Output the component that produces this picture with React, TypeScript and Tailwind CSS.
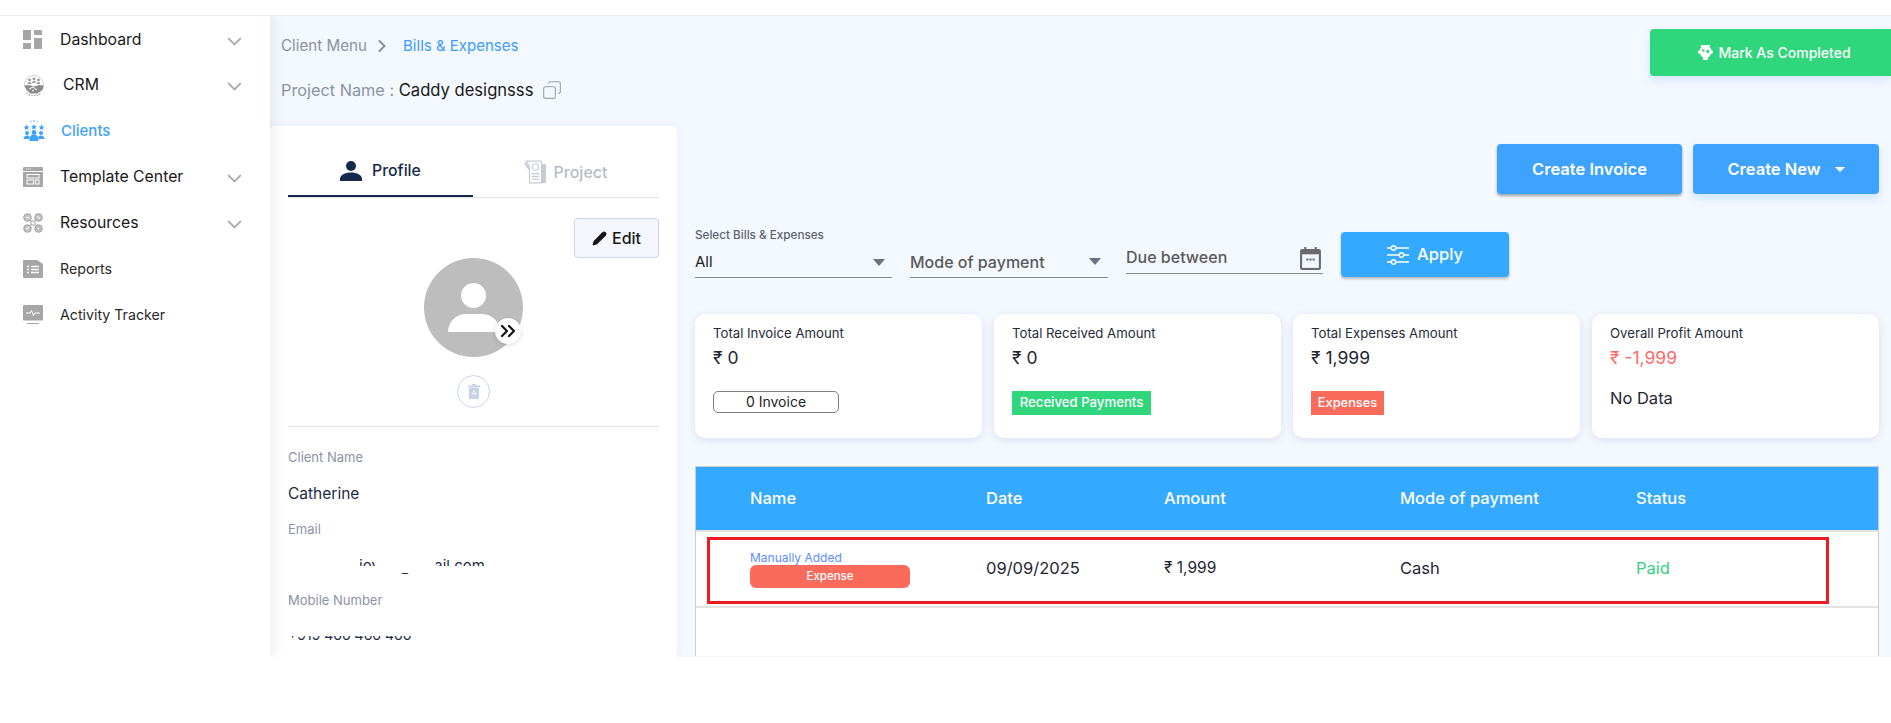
import React from 'react';
import { ChevronDown, ChevronRight, ChevronsRight, Copy, Pencil } from 'lucide-react';

const font = { fontFamily: 'Inter, "Noto Sans", sans-serif' };

const DashboardIcon = () => (
  <svg width="20" height="20" viewBox="0 0 20 20" fill="#a6a6a6">
    <rect x="0" y="0" width="8" height="10" />
    <rect x="11" y="0" width="8" height="5" />
    <rect x="11" y="8" width="8" height="11" />
    <rect x="0" y="13" width="8" height="6" />
  </svg>
);

const CrmIcon = () => (
  <svg width="22" height="22" viewBox="0 0 22 22" fill="#9a9a9a">
    <path d="M1.500 11a9.500 9.500 0 0 1 19 0" fill="none" stroke="#b0b0b0" strokeWidth="1" strokeDasharray="1.500 1" />
    <circle cx="6.500" cy="6" r="1.400" />
    <circle cx="11" cy="5" r="1.400" />
    <circle cx="15.500" cy="6" r="1.400" />
    <path d="M4.500 10a2 2 0 0 1 4 0zM9 9a2 2 0 0 1 4 0zM13.500 10a2 2 0 0 1 4 0z" />
    <path d="M1 11.500l5-.5 5 1.500 5-1.500 5 .5-1.500 4.500-5 3.500h-7l-4-3.500z" fill="#8c8c8c" />
    <path d="M6 15l4-2 4 3M9 17l2-1" fill="none" stroke="#fff" strokeWidth="1" />
    <path d="M4 19a10 10 0 0 0 14 0" fill="none" stroke="#b0b0b0" strokeWidth="1.500" strokeDasharray="1.500 1" />
  </svg>
);

const ClientsIcon = () => (
  <svg width="22" height="22" viewBox="0 0 22 22" fill="#3ea2ff">
    <path d="M3.500 4.500l.9 1.900 2 .2-1.500 1.300.5 2-1.900-1-1.900 1 .5-2L.6 6.600l2-.2zM11 4l.9 1.900 2 .2-1.500 1.300.5 2-1.900-1-1.900 1 .5-2-1.500-1.300 2-.2zM18.500 4.500l.9 1.900 2 .2-1.500 1.300.5 2-1.900-1-1.900 1 .5-2-1.500-1.300 2-.2z" />
    <path d="M11 0v2.200M7.500.8l.6 1.600M14.500.8l-.6 1.600" stroke="#3ea2ff" strokeWidth=".8" />
    <circle cx="4" cy="13" r="2" />
    <circle cx="18" cy="13" r="2" />
    <circle cx="11" cy="12.500" r="2.400" />
    <path d="M0.500 19a3.500 3.500 0 0 1 6 -2.500v2.500zM21.500 19a3.500 3.500 0 0 0 -6 -2.500v2.500z" />
    <path d="M6.500 21v-2a4.500 4.500 0 0 1 9 0v2z" />
  </svg>
);

const TemplateIcon = () => (
  <svg width="20" height="20" viewBox="0 0 20 20">
    <path d="M1 0h18a1 1 0 0 1 1 1v3H0V1a1 1 0 0 1 1-1z" fill="#a6a6a6" />
    <rect x="0" y="5" width="20" height="15" fill="#a6a6a6" />
    <path d="M3 2h1M5 2h1M7 2h1" stroke="#fff" strokeWidth="1" />
    <rect x="4" y="7.500" width="12" height="3.500" fill="none" stroke="#fff" strokeWidth="1" />
    <rect x="4" y="13" width="6.500" height="4" fill="none" stroke="#fff" strokeWidth="1" />
    <rect x="12.500" y="13" width="3.500" height="4" fill="none" stroke="#fff" strokeWidth="1" />
  </svg>
);

const ResourcesIcon = () => (
  <svg width="20" height="20" viewBox="0 0 20 20" fill="#c4c4c4" stroke="#a0a0a0" strokeWidth="1">
    <circle cx="4.500" cy="4.500" r="3.800" />
    <circle cx="15.500" cy="4.500" r="3.800" />
    <circle cx="4.500" cy="15.500" r="3.800" />
    <circle cx="15.500" cy="15.500" r="3.800" />
    <rect x="8" y="8" width="4" height="4" fill="#fff" />
    <circle cx="15.500" cy="15.500" r="1.500" fill="#fff" />
    <path d="M3 4.500h3M14 3.500l3 2M3 16l3-1.500" stroke="#fff" />
  </svg>
);

const ReportsIcon = () => (
  <svg width="20" height="18" viewBox="0 0 20 18" fill="#a6a6a6">
    <path d="M0 1a1 1 0 0 1 1-1h13l6 4v13a1 1 0 0 1-1 1H1a1 1 0 0 1-1-1z" />
    <path d="M4 6.500h2M8 6.500h8M4 9.500h2M8 9.500h8M4 12.500h2M8 12.500h8" stroke="#fff" strokeWidth="1.500" />
  </svg>
);

const ActivityIcon = () => (
  <svg width="20" height="20" viewBox="0 0 20 20" fill="#a6a6a6">
    <rect x="0" y="0" width="20" height="15.500" rx="1" />
    <path d="M3 8h4l1.500-2.500 2 5 1.500-2.500h5" fill="none" stroke="#fff" strokeWidth="1" />
    <rect x="4" y="18" width="12" height="1" />
  </svg>
);

const ProjectIcon = () => (
  <svg width="24" height="24" viewBox="0 0 22 22" fill="none">
    <path d="M17 4h4v17h-4z" fill="#c4c9d2" />
    <path d="M3 1h14v20H6V6z" fill="#fff" stroke="#c4c9d2" strokeWidth="1" />
    <path d="M1 3l1.500-1 4 6-1.500 1z" fill="#c4c9d2" />
    <circle cx="11.500" cy="6.500" r="3" stroke="#c4c9d2" strokeWidth="1" />
    <path d="M8 12.500h7M8 15h7M8 17.500h7" stroke="#c4c9d2" strokeWidth="1.200" />
  </svg>
);

const TrashIcon = () => (
  <svg width="12" height="15" viewBox="0 0 12 15" fill="#c5d3e8">
    <rect x="0" y="1.500" width="12" height="1.500" />
    <rect x="4" y="0" width="4" height="1.500" />
    <path d="M1 3.500h10V15H1z" />
    <path d="M6 6.500l2 3.500H4z" fill="none" stroke="#fff" strokeWidth=".8" />
  </svg>
);

const OwlIcon = () => (
  <svg width="15" height="15" viewBox="0 0 15 15" fill="#fff">
    <rect x="3" y="0" width="9" height="3" />
    <path d="M2 3h11v6l-2 3H4L2 9z" />
    <path d="M0 6l2-1v4L0 8zM15 6l-2-1v4l2-1z" />
    <rect x="5" y="12" width="5" height="3" />
    <rect x="4" y="4.500" width="2.500" height="2" fill="#2fd67c" />
    <rect x="8.500" y="5" width="2.500" height="3" fill="#2fd67c" />
  </svg>
);

const SlidersIcon = () => (
  <svg width="22" height="22" viewBox="0 0 22 22" fill="none" stroke="#fff" strokeWidth="1.400">
    <path d="M0 4h4M9 4h13M0 11h12M17 11h5M0 18h4M9 18h13" />
    <circle cx="6.500" cy="4" r="2.200" />
    <circle cx="14.500" cy="11" r="2.200" />
    <circle cx="6.500" cy="18" r="2.200" />
  </svg>
);

const Caret = ({ color = '#6b7280', size = 'border-t-[7px] border-x-[6px]' }: { color?: string; size?: string }) => (
  <span
    className={`inline-block h-0 w-0 border-x-transparent ${size}`}
    style={{ borderTopColor: color }}
  />
);

const menu = [
  { label: 'Dashboard', icon: <DashboardIcon />, arrow: true, cls: 'h-[45px] text-[15.8px] text-[#1a1a1a]', txt: '' },
  { label: 'CRM', icon: <CrmIcon />, arrow: true, cls: 'h-[46px] text-[15.8px] text-[#1a1a1a]', txt: 'pl-[3px]' },
  { label: 'Clients', icon: <ClientsIcon />, arrow: false, cls: 'h-[46px] text-[15px] text-[#3ea2ff] font-medium', txt: 'pl-[1px]' },
  { label: 'Template Center', icon: <TemplateIcon />, arrow: true, cls: 'h-[46px] text-[15.8px] text-[#1a1a1a]', txt: '' },
  { label: 'Resources', icon: <ResourcesIcon />, arrow: true, cls: 'h-[45px] text-[15.8px] text-[#1a1a1a]', txt: '' },
  { label: 'Reports', icon: <ReportsIcon />, arrow: false, cls: 'h-[47px] text-[14.2px] text-[#2a2a2a]', txt: '' },
  { label: 'Activity Tracker', icon: <ActivityIcon />, arrow: false, cls: 'h-[46px] text-[14.2px] text-[#2a2a2a]', txt: '' },
];

const Sidebar = () => (
  <aside className="relative z-10 w-[270px] shrink-0 bg-white pt-[1px] shadow-[2px_0_14px_rgba(0,0,0,0.09)]">
    {menu.map((m) => (
      <div key={m.label} className={`flex items-center ${m.cls}`}>
        <span className="flex w-[60px] shrink-0 items-center justify-start pl-[23px]">{m.icon}</span>
        <span className={`flex-1 ${m.txt}`}>{m.label}</span>
        {m.arrow && <ChevronDown size={23} strokeWidth={2} className="mr-[24px] mt-[3px] text-[#aaaaaa]" />}
      </div>
    ))}
  </aside>
);

const Field = ({ label, children }: { label: string; children: React.ReactNode }) => (
  <div>
    <div className="text-[13px] leading-[18px] text-[#8a94a6]">{label}</div>
    {children}
  </div>
);

const ProfileCard = () => (
  <section className="h-[531px] w-[407px] shrink-0 overflow-hidden rounded-t-[4px] bg-white px-[18px] shadow-[0_0_10px_rgba(60,90,140,0.07)]">
    <div className="flex h-[72px] border-b border-[#e1e3e6]">
      <div className="flex w-[185px] items-center justify-center gap-[10px] border-b-2 border-[#16294a] pt-[20px] text-[15.8px] font-medium text-[#16294a]">
        <svg width="22" height="22" viewBox="0 0 22 22" fill="#16294a">
          <circle cx="11" cy="6" r="5" />
          <path d="M0 21v-2c0-4 5-6.500 11-6.500s11 2.500 11 6.500v2z" />
        </svg>
        Profile
      </div>
      <div className="flex flex-1 items-center justify-center gap-[7px] pt-[20px] pr-[2px] text-[16px] font-medium text-[#b7bcc5]">
        <ProjectIcon />
        Project
      </div>
    </div>

    <div className="mt-[20px] flex justify-end">
      <button className="flex h-[40px] w-[85px] items-center justify-center gap-[5px] rounded-[4px] border border-[#c9d5e8] bg-[#f4f7fd] text-[16px] font-medium text-[#1a1a1a]">
        <Pencil size={15} fill="#111" strokeWidth={2} />
        Edit
      </button>
    </div>

    <div className="flex flex-col items-center">
      <div className="relative h-[99px] w-[99px] overflow-visible rounded-full bg-[#bdbdbd]">
        <div className="absolute left-[37px] top-[25px] h-[25px] w-[25px] rounded-full bg-white" />
        <div className="absolute left-[24px] top-[56px] h-[18px] w-[52px] rounded-t-[24px] bg-white" />
        <div className="absolute left-[71px] top-[60px] flex h-[26px] w-[26px] items-center justify-center rounded-full bg-white shadow-[0_1px_4px_rgba(0,0,0,0.15)]">
          <ChevronsRight size={24} strokeWidth={2.2} className="text-[#111]" />
        </div>
      </div>
      <div className="mt-[18px] flex h-[33px] w-[33px] items-center justify-center rounded-full border border-[#c9d5e8]">
        <TrashIcon />
      </div>
    </div>

    <div className="mt-[18px] flex flex-col border-t border-[#e1e3e6] pt-[21px]">
      <Field label="Client Name">
        <div className="mt-[17px] text-[15.5px] leading-[22px] text-[#1d2b44]">Catherine</div>
      </Field>
      <div className="mt-[15px]">
        <Field label="Email">
          <div className="relative mt-[18px] h-[20px] overflow-hidden whitespace-nowrap text-[15px] leading-[20px] text-[#1d2b44]">
            catherine.joy78@gmail.com
            <div className="absolute inset-y-0 left-0 w-[72px] bg-white" />
            <div className="absolute left-[88px] top-0 h-[10px] w-[60px] bg-white" />
            <div className="absolute inset-x-0 top-[10px] h-[7px] bg-white" />
            <div className="absolute bottom-0 left-0 top-[17px] w-[92px] bg-white" />
            <div className="absolute bottom-0 left-[124px] right-0 top-[17px] bg-white" />
          </div>
        </Field>
      </div>
      <div className="mt-[15px]">
        <Field label="Mobile Number">
          <div className="mt-[27px] h-[4px] overflow-hidden text-[14px] leading-[20px] text-[#1d2b44]">
            <div className="-mt-[11px]">+919 466 466 466</div>
          </div>
        </Field>
      </div>
    </div>
  </section>
);

const stats = [
  { title: 'Total Invoice Amount', value: '₹ 0', tone: 'text-[#1f2533]', foot: <div className="flex h-[22px] w-[126px] items-center justify-center rounded-[5px] border border-[#808080] pb-[2px] text-[14px] text-[#222]">0 Invoice</div> },
  { title: 'Total Received Amount', value: '₹ 0', tone: 'text-[#1f2533]', foot: <div className="flex h-[24px] w-[139px] items-center justify-center bg-[#2fd67c] text-[13.2px] font-medium text-white">Received Payments</div> },
  { title: 'Total Expenses Amount', value: '₹ 1,999', tone: 'text-[#1f2533]', foot: <div className="flex h-[24px] w-[73px] items-center justify-center bg-[#fb6b5c] text-[12.8px] font-medium text-white">Expenses</div> },
  { title: 'Overall Profit Amount', value: '₹ -1,999', tone: 'text-[#fb6b6b]', foot: <div className="-mt-[5px] text-[16.5px] leading-[24px] text-[#1f2533]">No Data</div> },
];

const columns = ['Name', 'Date', 'Amount', 'Mode of payment', 'Status'];

const App = () => {
  return (
    <div className="h-[723px] w-[1891px] overflow-hidden bg-white" style={font}>
      <div className="h-[16px] border-b border-[#e8ebf0] bg-white" />
      <div className="flex h-[641px] overflow-hidden">
        <Sidebar />
        <main className="min-w-0 flex-1 bg-[#f4f8ff]">
          <div className="flex h-[110px] justify-between">
            <div className="pl-[11px] pt-[21px]">
              <div className="flex h-[18px] items-center text-[15.2px]">
                <span className="text-[#8b93a1]">Client Menu</span>
                <ChevronRight size={20} strokeWidth={2.5} className="ml-[5px] mr-[11px] text-[#8b93a1]" />
                <span className="text-[15px] text-[#3d9bff]">Bills &amp; Expenses</span>
              </div>
              <div className="mt-[23px] flex h-[24px] items-center">
                <span className="text-[16.3px] text-[#8b93a1]">Project Name :&nbsp;</span>
                <span className="text-[16.6px] text-[#1a1a1a]">Caddy designsss</span>
                <Copy size={20} strokeWidth={1.3} className="ml-[9px] -scale-x-100 text-[#9aa1ad]" />
              </div>
            </div>
            <button className="mt-[13px] flex h-[47px] w-[241px] items-center justify-center gap-[5px] rounded-l-[4px] bg-[#2fd67c] pl-[8px] text-[14px] font-medium text-white shadow-[0_4px_10px_rgba(80,170,255,0.2)]">
              <OwlIcon />
              Mark As Completed
            </button>
          </div>

          <div className="flex">
            <ProfileCard />
            <div className="ml-[18px] w-[1184px]">
              <div className="flex justify-end gap-[11px] pt-[18px]">
                <button className="h-[50px] w-[185px] rounded-[4px] bg-[#3ea2ff] text-[16.5px] font-semibold text-white shadow-[0_2px_3px_rgba(0,0,0,0.35)]">
                  Create Invoice
                </button>
                <button className="flex h-[50px] w-[186px] items-center justify-center gap-[14px] rounded-[4px] bg-[#3ea2ff] text-[16.5px] font-semibold text-white shadow-[0_4px_10px_rgba(80,170,255,0.25)]">
                  Create New
                  <Caret color="#ffffff" size="border-t-[5px] border-x-[5px]" />
                </button>
              </div>

              <div className="mt-[34px] flex items-start gap-[18px]">
                <div className="w-[197px]">
                  <div className="text-[11.7px] leading-[14px] font-medium text-[#5c6470]">Select Bills &amp; Expenses</div>
                  <div className="mt-[6px] flex h-[30px] items-center justify-between border-b border-[#8a8a8a] pr-[7px] text-[15px] text-[#222]">
                    All
                    <Caret />
                  </div>
                </div>
                <div className="w-[198px] pt-[20px]">
                  <div className="flex h-[30px] items-center justify-between border-b border-[#8a8a8a] pb-[2px] pr-[7px] text-[16px] font-medium text-[#5a5a5a]">
                    Mode of payment
                    <Caret />
                  </div>
                </div>
                <div className="w-[197px] pt-[21px]">
                  <div className="flex h-[25px] items-center justify-between border-b border-[#8a8a8a] pb-[9px] text-[16px] font-medium text-[#5a5a5a]">
                    Due between
                    <svg width="23" height="23" viewBox="0 0 22 22" fill="#6a6a6a" className="mr-[1px] mt-[4px]">
                      <path d="M5 0h2v2h8V0h2v2h2a2 2 0 0 1 2 2v16a2 2 0 0 1-2 2H3a2 2 0 0 1-2-2V4a2 2 0 0 1 2-2h2z" />
                      <rect x="3" y="7" width="16" height="13" fill="#f4f8ff" />
                      <path d="M7 11h2v2H7zM10 11h2v2h-2zM13 11h2v2h-2z" />
                    </svg>
                  </div>
                </div>
                <button className="mt-[4px] flex h-[45px] w-[168px] items-center justify-center gap-[8px] rounded-[4px] bg-[#33aaff] text-[16.5px] font-medium text-white shadow-[0_2px_3px_rgba(0,0,0,0.25)]">
                  <SlidersIcon />
                  Apply
                </button>
              </div>

              <div className="mt-[36px] grid grid-cols-4 gap-[12px]">
                {stats.map((s) => (
                  <div key={s.title} className="h-[124px] rounded-[10px] bg-white pl-[18px] pt-[10px] shadow-[0_2px_8px_rgba(60,80,120,0.14)]">
                    <div className="text-[13.2px] leading-[18px] text-[#262c3a]">{s.title}</div>
                    <div className={`mt-[4px] text-[17.5px] leading-[24px] ${s.tone}`}>{s.value}</div>
                    <div className="mt-[21px]">{s.foot}</div>
                  </div>
                ))}
              </div>

              <div className="mt-[28px] h-[190px] border-x border-t border-[#c9ced6] bg-white">
                <div className="grid h-[63px] grid-cols-[236px_178px_236px_236px_1fr] items-center bg-[#33aaff] pl-[54px] text-[16.5px] font-medium text-white">
                  {columns.map((c) => (
                    <div key={c}>{c}</div>
                  ))}
                </div>
                <div className="relative grid h-[78px] grid-cols-[236px_178px_236px_236px_1fr] items-center border-y-2 border-[#e2e2e2] pb-[2px] pl-[54px] text-[16.5px] text-[#1f2533]">
                  <div className="flex flex-col pt-[2px]">
                    <span className="text-[12px] leading-[15px] text-[#5b8dff]">Manually Added</span>
                    <span className="flex h-[23px] w-[160px] items-center justify-center rounded-[6px] bg-[#fb6b5c] text-[11.5px] font-medium text-white">Expense</span>
                  </div>
                  <div>09/09/2025</div>
                  <div className="text-[15.5px]">₹ 1,999</div>
                  <div>Cash</div>
                  <div className="text-[#37d07f]">Paid</div>
                  <div className="absolute left-[11px] top-[5px] h-[67px] w-[1122px] border-[3px] border-[#ed1c24]" />
                </div>
              </div>
            </div>
          </div>
        </main>
      </div>
    </div>
  );
};

export default App;
